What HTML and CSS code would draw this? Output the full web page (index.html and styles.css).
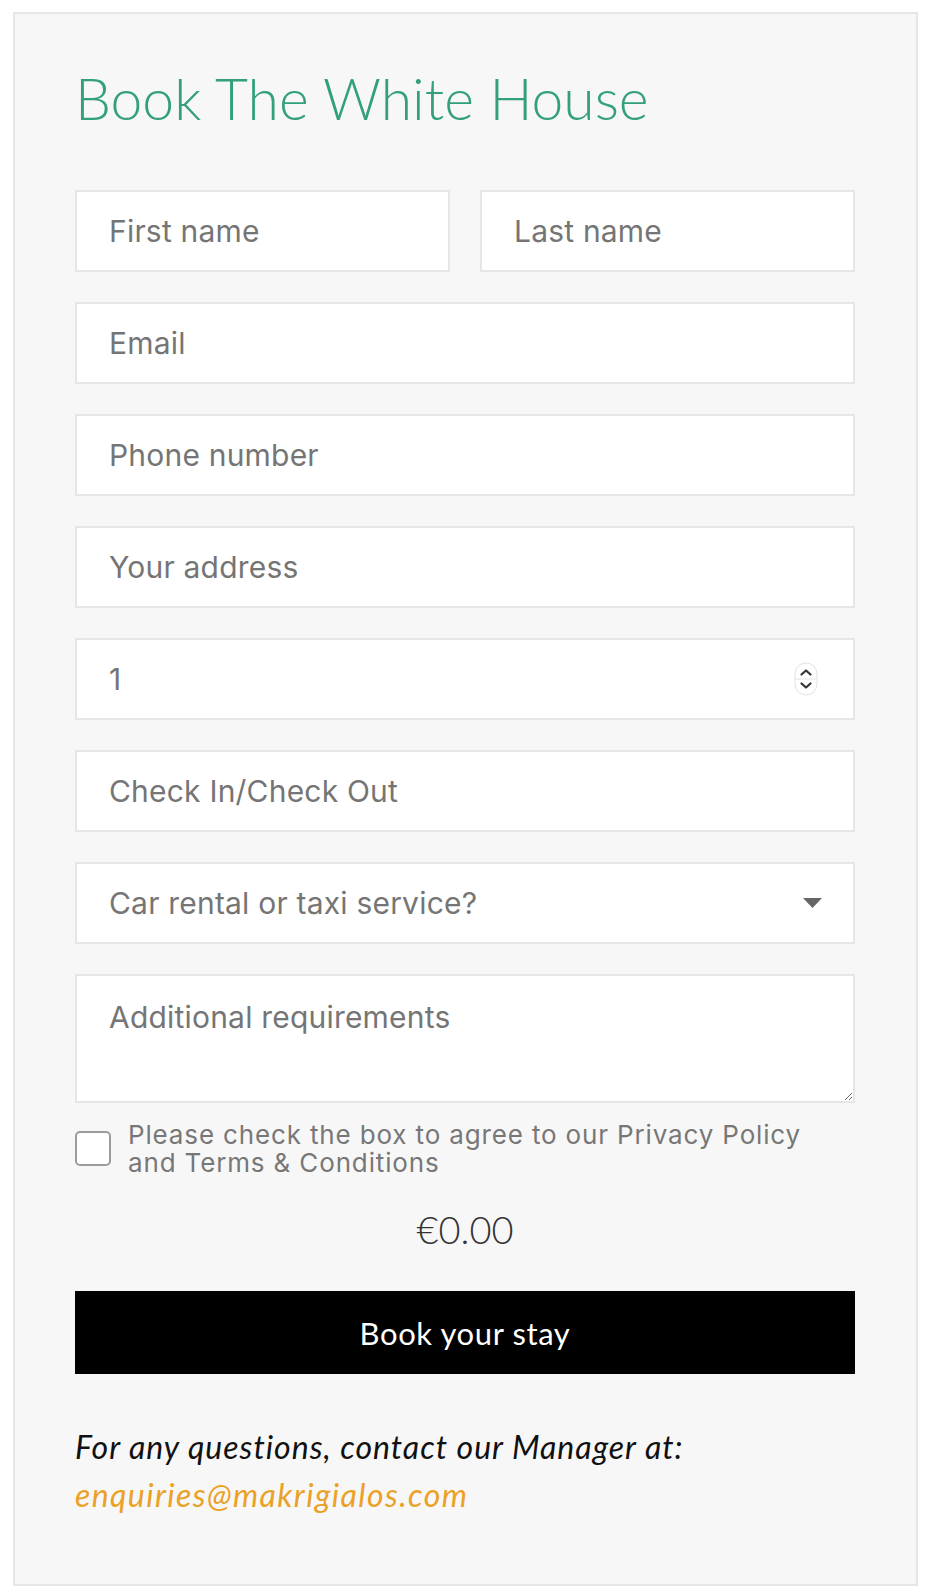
FILE: index.html
```html
<!DOCTYPE html>
<html lang="en">
<head>
<meta charset="utf-8">
<title>Book The White House</title>
<link rel="stylesheet" href="styles.css">
</head>
<body>
<div class="card">
  <h1 class="title">Book The White House</h1>
  <form class="form">
    <div class="row-2">
      <input class="field" type="text" placeholder="First name">
      <input class="field" type="text" placeholder="Last name">
    </div>
    <input class="field" type="email" placeholder="Email">
    <input class="field" type="tel" placeholder="Phone number">
    <input class="field" type="text" placeholder="Your address">
    <div class="field field-wrap">
      <input class="inner" type="text" value="1">
      <svg class="spinner" width="24" height="34" viewBox="0 0 24 34">
        <rect x="1" y="1" width="22" height="32" rx="11" fill="#fff" stroke="#e2e2e2" stroke-width="1"/>
        <line x1="1" y1="17" x2="23" y2="17" stroke="#e2e2e2" stroke-width="1"/>
        <path d="M7.5 12.5 L12 8.5 L16.5 12.5" fill="none" stroke="#333" stroke-width="2.2" stroke-linecap="round" stroke-linejoin="round"/>
        <path d="M7.5 21.5 L12 25.5 L16.5 21.5" fill="none" stroke="#333" stroke-width="2.2" stroke-linecap="round" stroke-linejoin="round"/>
      </svg>
    </div>
    <input class="field" type="text" placeholder="Check In/Check Out">
    <div class="field field-wrap">
      <span class="inner select-text">Car rental or taxi service?</span>
      <svg class="caret" width="19" height="10" viewBox="0 0 19 10"><path d="M0 0 H19 L9.5 10 Z" fill="#666"/></svg>
    </div>
    <textarea class="field area" placeholder="Additional requirements"></textarea>
  </form>
  <label class="agree">
    <input class="box" type="checkbox">
    <span class="agree-text">Please check the box to agree to our Privacy Policy and Terms &amp; Conditions</span>
  </label>
  <div class="price">€0.00</div>
  <button class="book" type="button">Book your stay</button>
  <p class="contact">For any questions, contact our Manager at:<br><a class="mail" href="#">enquiries@makrigialos.com</a></p>
</div>
</body>
</html>
```

FILE: styles.css
```css
* { box-sizing: border-box; }

body {
  margin: 0;
  background: #fff;
  font-family: Lato, "Open Sans", sans-serif;
}

.card {
  width: 905px;
  margin: 12px 10px 0 13px;
  border: 2px solid #e6e6e6;
  background: #f7f7f7;
  padding: 51px 61px 65px 60px;
}

.title {
  margin: 0;
  font-family: Lato, sans-serif;
  font-weight: 300;
  font-size: 57px;
  line-height: 67px;
  color: #33a07b;
}

.form {
  margin-top: 58px;
  display: flex;
  flex-direction: column;
  gap: 30px;
}

.row-2 {
  display: grid;
  grid-template-columns: 1fr 1fr;
  gap: 30px;
}

.field {
  display: block;
  width: 100%;
  height: 82px;
  margin: 0;
  padding: 0 32px;
  border: 2px solid #e6e6e6;
  border-radius: 0;
  background: #fff;
  font-family: Inter, Roboto, sans-serif;
  font-size: 30px;
  letter-spacing: 0.2px;
  color: #555;
  outline: none;
}

.field::placeholder { color: #757575; opacity: 1; }

.field-wrap {
  display: flex;
  align-items: center;
  padding-right: 35px;
}

.inner {
  flex: 1;
  min-width: 0;
  border: none;
  padding: 0;
  margin: 0;
  background: transparent;
  font: inherit;
  letter-spacing: inherit;
  color: #757575;
  outline: none;
}

.spinner { flex: none; }
.caret { flex: none; margin-right: -4px; }

.area {
  height: 129px;
  padding-top: 22px;
  line-height: 38px;
  resize: vertical;
}

.agree {
  display: flex;
  align-items: flex-start;
  gap: 17px;
  margin-top: 18px;
  padding-right: 40px;
}

.box {
  appearance: none;
  -webkit-appearance: none;
  flex: none;
  width: 36px;
  height: 35px;
  margin: 10px 0 0;
  border: 2px solid #9c9c9c;
  border-radius: 5px;
  background: #fff;
}

.agree-text {
  font-family: Inter, Roboto, sans-serif;
  font-size: 26px;
  line-height: 28px;
  letter-spacing: 0.85px;
  color: #777;
}

.price {
  margin-top: 29px;
  text-align: center;
  font-family: Lato, sans-serif;
  font-weight: 300;
  font-size: 38px;
  line-height: 46px;
  color: #333;
}

.book {
  display: block;
  width: 100%;
  height: 83px;
  margin-top: 39px;
  border: none;
  background: #000;
  color: #fff;
  font-family: Lato, sans-serif;
  font-size: 31px;
  font-weight: 400;
  letter-spacing: 0.6px;
}

.contact {
  margin: 49px 0 0;
  font-family: Lato, sans-serif;
  font-style: italic;
  font-size: 32px;
  line-height: 48px;
  letter-spacing: 1px;
  color: #111;
}

.mail {
  color: #eba125;
  text-decoration: none;
  letter-spacing: 1.4px;
}
```
